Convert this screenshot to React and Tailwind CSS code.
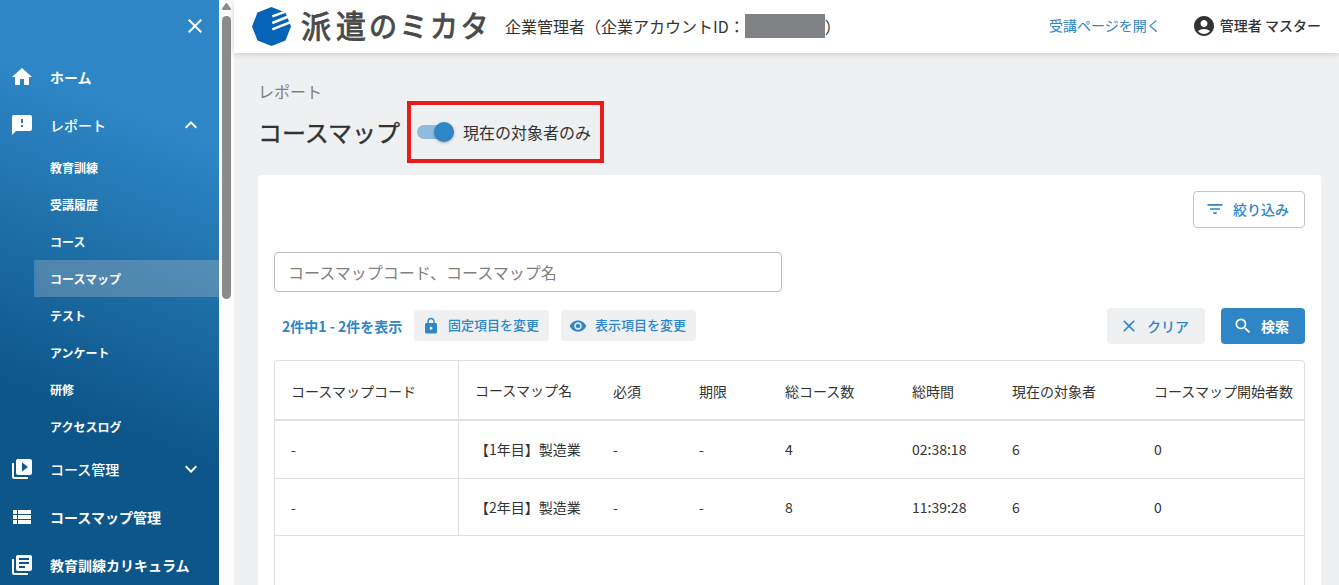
import { useState } from 'react';
import clsx from 'clsx';
import {
  MdAccountCircle,
  MdClose,
  MdExpandLess,
  MdExpandMore,
  MdFeedback,
  MdFilterList,
  MdHome,
  MdLibraryBooks,
  MdLock,
  MdSearch,
  MdVideoLibrary,
  MdViewList,
  MdVisibility,
} from 'react-icons/md';

const reportItems = [
  '教育訓練',
  '受講履歴',
  'コース',
  'コースマップ',
  'テスト',
  'アンケート',
  '研修',
  'アクセスログ',
];

const columns = [
  'コースマップコード',
  'コースマップ名',
  '必須',
  '期限',
  '総コース数',
  '総時間',
  '現在の対象者',
  'コースマップ開始者数',
];

const rows = [
  ['-', '【1年目】製造業', '-', '-', '4', '02:38:18', '6', '0'],
  ['-', '【2年目】製造業', '-', '-', '8', '11:39:28', '6', '0'],
];

const gridCols = 'grid grid-cols-[184px_138px_86px_86px_127px_100px_142px_1fr]';

const NavItem = ({ icon: Icon, label, arrow: Arrow }) => (
  <div className={clsx('flex h-12 shrink-0 items-center pl-[10px] pr-4 text-sm', Arrow ? 'font-medium' : 'font-bold')}>
    <Icon className="size-6 shrink-0" />
    <span className="ml-4 flex-1 whitespace-nowrap pb-px">{label}</span>
    {Arrow && <Arrow className="size-6" />}
  </div>
);

const Sidebar = () => {
  const [selected, setSelected] = useState('コースマップ');

  return (
    <nav className="flex w-[219px] shrink-0 flex-col bg-[linear-gradient(202deg,#2e86c6_138px,#0d5689_436px)] text-white">
      <div className="flex h-[53px] shrink-0 items-center justify-end pb-px pr-3">
        <MdClose className="size-6" />
      </div>
      <NavItem icon={MdHome} label="ホーム" />
      <NavItem icon={MdFeedback} label="レポート" arrow={MdExpandLess} />
      {reportItems.map((item) => (
        <div
          key={item}
          onClick={() => setSelected(item)}
          className={clsx(
            'ml-[34px] flex h-[37px] shrink-0 cursor-pointer items-center border-l-2 pl-[14px] pt-px text-xs font-bold',
            item === selected ? 'border-[#2e86c6] bg-[#c8c8c8]/30' : 'border-transparent'
          )}
        >
          {item}
        </div>
      ))}
      <NavItem icon={MdVideoLibrary} label="コース管理" arrow={MdExpandMore} />
      <NavItem icon={MdViewList} label="コースマップ管理" />
      <NavItem icon={MdLibraryBooks} label="教育訓練カリキュラム" />
    </nav>
  );
};

const Scrollbar = () => (
  <div className="flex w-[15px] shrink-0 flex-col items-center bg-[#fcfcfc] pt-[3px]">
    <svg viewBox="0 0 9 7" className="h-[7px] w-[9px]" fill="#8b8b8b">
      <path d="M3.7.5Q4.5-.4 5.3.5L8.8 5.6Q9.2 7 8 7H1Q-.2 7 .2 5.6Z" />
    </svg>
    <div className="mt-[6px] h-[283px] w-[9px] rounded-full bg-[#8b8b8b]" />
  </div>
);

const Logo = () => (
  <div className="flex items-center">
    <svg viewBox="0 0 39 39" className="size-[39px]">
      <path d="M19.5 0 33.5 5.5 39 19.5 33.5 33.5 19.5 39 5.5 33.5 0 19.5 5.5 5.5Z" fill="#0663b8" />
      <g stroke="#fff" strokeWidth="2.6">
        <path d="M20.3 9.4 33.5 4.6" />
        <path d="M20.3 16 35.8 9.8" />
        <path d="M20.3 22.4 38 15.4" />
      </g>
    </svg>
    <div className="ml-[10px] flex scale-y-105 items-center whitespace-nowrap pb-1 leading-none text-[#4a4a4a] [-webkit-text-stroke:0.9px]">
      <span className="w-[68px] text-[30px] tracking-[5px]">派遣</span>
      <span className="text-[28px] tracking-[2.5px]">のミカタ</span>
    </div>
  </div>
);

const Header = () => (
  <header className="z-10 flex h-[53px] shrink-0 items-center bg-white pb-px pl-[18px] pr-[18px] shadow-[0_1px_6px_rgba(0,0,0,0.16)]">
    <Logo />
    <div className="ml-[14px] flex items-center whitespace-nowrap">
      <span>企業管理者（企業アカウントID：</span>
      <span className="h-6 w-20 bg-[#808285]" />
      <span>）</span>
    </div>
    <a className="ml-auto pb-0.5 text-sm text-[#2e86c6]">受講ページを開く</a>
    <div className="ml-[31px] flex items-center text-sm font-medium">
      <MdAccountCircle className="mr-1 size-6" />
      <span className="pb-0.5">管理者 マスター</span>
    </div>
  </header>
);

const CourseTable = () => (
  <div className="mt-4 flex-1 rounded-t border border-b-0 border-[#e0e0e0] text-sm">
    <div className={clsx(gridCols, 'h-[60px] border-b-2 border-[#e0e0e0]')}>
      {columns.map((name, i) => (
        <div
          key={name}
          className={clsx(
            'flex items-center whitespace-nowrap px-4',
            i === 0 && 'border-r border-[#e0e0e0]',
            i === 1 ? 'pb-px' : 'pt-px'
          )}
        >
          {name}
        </div>
      ))}
    </div>
    {rows.map((row) => (
      <div key={row[1]} className={clsx(gridCols, 'h-[57.5px] border-b border-[#e0e0e0]')}>
        {row.map((value, i) => (
          <div
            key={i}
            className={clsx('flex items-center whitespace-nowrap px-4', i === 0 && 'border-r border-[#e0e0e0]')}
          >
            {value}
          </div>
        ))}
      </div>
    ))}
  </div>
);

const App = () => {
  const [currentOnly, setCurrentOnly] = useState(true);

  return (
    <div className="flex h-screen overflow-hidden bg-[#eff0f2] font-['Noto_Sans_CJK_JP',sans-serif] text-base text-[#333]">
      <Sidebar />
      <Scrollbar />
      <div className="flex min-w-0 flex-1 flex-col">
        <Header />
        <main className="flex min-h-0 flex-1 flex-col pl-6 pr-[18px] pt-[26px]">
          <div className="h-6 leading-6 text-[#808080]">レポート</div>
          <div className="-mt-0.5 flex h-[62px] items-center">
            <h1 className="w-[149px] whitespace-nowrap pb-px text-2xl [-webkit-text-stroke:0.4px]">コースマップ</h1>
            {/* Target filter */}
            <div className="flex h-[62px] w-[197px] items-center border-4 border-[#e81c1c] pl-[6px]">
              <button
                onClick={() => setCurrentOnly(!currentOnly)}
                className={clsx(
                  'flex h-[14px] w-[37px] items-center rounded-full',
                  currentOnly ? 'justify-end bg-[#8fbcdd]' : 'justify-start bg-gray-400'
                )}
              >
                <span className="size-5 shrink-0 rounded-full bg-[#2e86c6] shadow-[0_1px_3px_rgba(0,0,0,0.3)]" />
              </button>
              <span className="ml-[9px] whitespace-nowrap">現在の対象者のみ</span>
            </div>
          </div>

          <section className="mt-3 flex flex-1 flex-col rounded-t bg-white px-4 pt-4">
            <button className="flex h-[37px] w-28 items-center self-end rounded border border-[#c4c4c4] pb-0.5 pl-[11px] text-sm font-medium text-[#2e86c6]">
              <MdFilterList className="mr-2 size-5" />
              絞り込み
            </button>
            <input
              placeholder="コースマップコード、コースマップ名"
              className="mt-6 h-10 w-[508px] shrink-0 rounded border border-[#bdbdbd] px-[13px] placeholder:text-[#808080]"
            />

            <div className="mt-4 flex h-9 shrink-0 items-center text-[#2e86c6]">
              <span className="w-[140px] whitespace-nowrap pl-2 text-sm font-bold">2件中1 - 2件を表示</span>
              <button className="mb-px flex h-[31px] w-[135px] items-center rounded bg-[#eff0f2] pl-2 text-[13px] font-medium">
                <MdLock className="mr-2 size-[18px]" />
                <span className="pb-0.5">固定項目を変更</span>
              </button>
              <button className="mb-px ml-3 flex h-[31px] w-[135px] items-center rounded bg-[#eff0f2] pl-2 text-[13px] font-medium">
                <MdVisibility className="mr-2 size-[18px]" />
                <span className="pb-0.5">表示項目を変更</span>
              </button>
              <button className="ml-auto flex h-9 w-[98px] items-center rounded bg-[#eff0f2] pl-3 text-sm font-medium">
                <MdClose className="mr-2 size-5" />
                <span className="pb-px">クリア</span>
              </button>
              <button className="ml-4 flex h-9 w-[84px] items-center rounded bg-[#2e86c6] pl-3 text-sm font-bold text-white">
                <MdSearch className="mr-2 size-5" />
                <span className="pb-px">検索</span>
              </button>
            </div>

            <CourseTable />
          </section>
        </main>
      </div>
    </div>
  );
};

export default App;
